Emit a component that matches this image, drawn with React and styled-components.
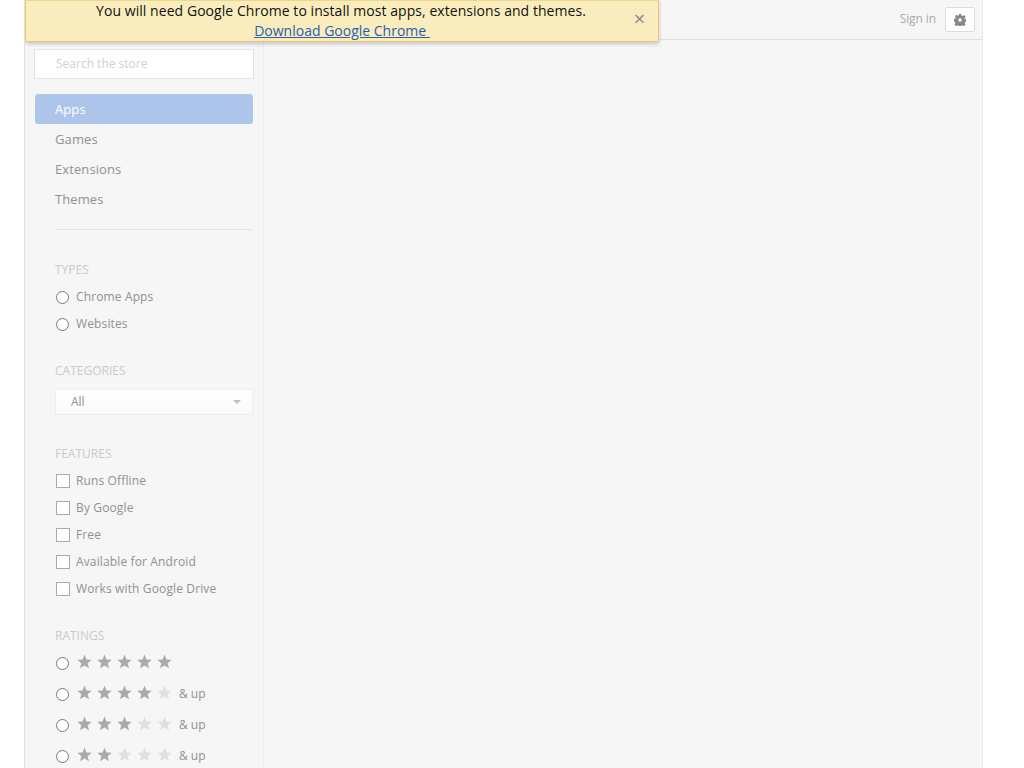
import React from 'react';
import styled, {createGlobalStyle} from 'styled-components';

const GlobalStyle = createGlobalStyle`
  html, body {
    margin: 0;
    padding: 0;
    height: 768px;
    overflow: hidden;
    background: #fff;
    font-family: "Open Sans", "Liberation Sans", sans-serif;
  }
`;

const types = ['Chrome Apps', 'Websites'];
const features = ['Runs Offline', 'By Google', 'Free', 'Available for Android', 'Works with Google Drive'];
const nav = ['Apps', 'Games', 'Extensions', 'Themes'];
const ratings = [5, 4, 3, 2];

const Star = ({on}) => (
    <StarIcon viewBox="0 0 16 16" $on={on}>
        <path d="M8 .6l2.1 5.2 5.6.4-4.3 3.6 1.4 5.500L8 12.300l-4.800 3 1.400-5.500L.3 6.200l5.600-.4z"/>
    </StarIcon>
);

const App = () => (
    <Page>
        <GlobalStyle/>
        <Banner>
            <BannerText>
                <BannerLine>You will need Google Chrome to install most apps, extensions and themes.</BannerLine>
                <BannerLink href="#">Download Google Chrome </BannerLink>
            </BannerText>
            <Close>×</Close>
        </Banner>
        <TopBar>
            <SignIn>Sign in</SignIn>
            <GearButton>
                <svg width="12" height="12" viewBox="0 0 24 24" fill="#888">
                    <path fillRule="evenodd" d="M9.500 0h5l.6 3.400 1.700.7 2.900-2 3.500 3.500-2 2.900.7 1.700 3.400.6v5l-3.400.6-.7 1.700 2 2.900-3.500 3.500-2.900-2-1.700.7-.6 3.400h-5l-.6-3.400-1.700-.7-2.900 2-3.500-3.500 2-2.900-.7-1.700L-.3 14.500v-5l3.400-.6.7-1.700-2-2.900L5.300 1.300l2.900 2 1.700-.7zM12 8.500a3.500 3.500 0 1 0 0 7 3.500 3.500 0 0 0 0-7z"/>
                </svg>
            </GearButton>
        </TopBar>
        <Body>
            <Sidebar>
                <Search placeholder="Search the store"/>
                <NavList>
                    {nav.map((item, i) => <NavItem key={item} $active={i === 0}>{item}</NavItem>)}
                </NavList>
                <Divider/>

                <SectionTitle>TYPES</SectionTitle>
                {types.map(item => (
                    <OptionRow key={item}>
                        <Radio type="radio" name="types"/>
                        <span>{item}</span>
                    </OptionRow>
                ))}

                <CategoryTitle>CATEGORIES</CategoryTitle>
                <Select>
                    All
                    <Caret/>
                </Select>

                <FeatureTitle>FEATURES</FeatureTitle>
                {features.map(item => (
                    <OptionRow key={item}>
                        <CheckBox/>
                        <span>{item}</span>
                    </OptionRow>
                ))}

                <RatingTitle>RATINGS</RatingTitle>
                {ratings.map(count => (
                    <RatingRow key={count}>
                        <RatingRadio type="radio" name="ratings"/>
                        <Stars>
                            {[1, 2, 3, 4, 5].map(n => <Star key={n} on={n <= count}/>)}
                        </Stars>
                        {count < 5 && <AndUp>&amp; up</AndUp>}
                    </RatingRow>
                ))}
            </Sidebar>
            <Content/>
        </Body>
    </Page>
);

const Page = styled.div`
  position: relative;
  box-sizing: border-box;
  width: 959px;
  height: 768px;
  margin-left: 24px;
  background: #f6f6f6;
  border-left: 1px solid #e0e0e0;
  border-right: 1px solid #e8e8e8;
  overflow: hidden;
`;

const Banner = styled.div`
  position: absolute;
  top: 0;
  left: 0;
  box-sizing: border-box;
  width: 634px;
  height: 42px;
  background: #f9edbe;
  border: 1px solid #f0c36d;
  border-top-color: #f0d58f;
  border-radius: 0 0 2px 2px;
  box-shadow: 0 2px 4px rgba(0, 0, 0, 0.2);
  display: flex;
  z-index: 2;
`;

const BannerText = styled.div`
  flex: 1;
  padding-left: 36px;
  text-align: center;
  font-size: 14px;
  line-height: 20px;
  color: #111;
`;

const BannerLine = styled.div`
  letter-spacing: 0.055px;
`;

const BannerLink = styled.a`
  margin-left: 2px;
  color: #2a5db0;
  text-decoration: underline;
  white-space: pre;
`;

const Close = styled.div`
  width: 38px;
  padding-left: 1px;
  box-sizing: border-box;
  font-size: 20px;
  line-height: 36px;
  text-align: center;
  color: #888;
`;

const TopBar = styled.div`
  box-sizing: border-box;
  height: 40px;
  padding: 6px 7px 0 0;
  display: flex;
  justify-content: flex-end;
  border-bottom: 1px solid #e0e0e0;
`;

const SignIn = styled.div`
  font-size: 12px;
  line-height: 25px;
  letter-spacing: -0.1px;
  color: #aaa;
  margin-right: 9px;
`;

const GearButton = styled.div`
  box-sizing: border-box;
  width: 30px;
  height: 25px;
  margin-top: 1px;
  background: #fff;
  border: 1px solid #dcdcdc;
  border-radius: 2px;
  display: flex;
  align-items: center;
  justify-content: center;
`;

const Body = styled.div`
  display: flex;
  height: 728px;
`;

const Sidebar = styled.div`
  box-sizing: border-box;
  width: 239px;
  padding: 9px 10px 0 30px;
  border-right: 1px solid #ececec;
  flex-shrink: 0;
`;

const Content = styled.div`
  flex: 1;
`;

const Search = styled.input`
  display: block;
  box-sizing: border-box;
  width: 220px;
  height: 30px;
  margin-left: -21px;
  padding: 0 21px 2px;
  background: #fff;
  border: 1px solid #e2e2e2;
  outline: none;
  font-family: inherit;
  font-size: 12px;
  &::placeholder {
    color: #d0d0d0;
    opacity: 1;
  }
`;

const NavList = styled.div`
  margin: 15px 0 0 -20px;
`;

const NavItem = styled.div`
  height: 30px;
  padding-left: 20px;
  font-size: 13px;
  line-height: 30px;
  letter-spacing: 0.1px;
  border-radius: 3px;
  color: ${p => (p.$active ? '#fff' : '#919191')};
  background: ${p => (p.$active ? '#aec5eb' : 'transparent')};
`;

const Divider = styled.div`
  height: 1px;
  margin-top: 15px;
  background: #e4e4e4;
`;

const SectionTitle = styled.div`
  margin-top: 31px;
  height: 22px;
  font-size: 12px;
  line-height: 18px;
  color: #cacaca;
`;

const CategoryTitle = styled(SectionTitle)`
  margin-top: 25px;
`;

const FeatureTitle = styled(SectionTitle)`
  margin-top: 30px;
`;

const RatingTitle = styled(SectionTitle)`
  margin-top: 25px;
  height: 21px;
`;

const OptionRow = styled.div`
  display: flex;
  align-items: center;
  height: 27px;
  font-size: 12px;
  letter-spacing: 0.13px;
  color: #919191;
`;

const Radio = styled.input`
  width: 13px;
  height: 13px;
  margin: 2px 7px 0 1px;
  flex-shrink: 0;
`;

const RatingRadio = styled(Radio)`
  margin-top: 0;
`;

const CheckBox = styled.span`
  box-sizing: border-box;
  width: 14px;
  height: 14px;
  margin: 1px 6px 0 1px;
  background: #fff;
  border: 1px solid #aaa;
  flex-shrink: 0;
`;

const Select = styled.div`
  position: relative;
  box-sizing: border-box;
  height: 26px;
  padding-left: 15px;
  margin-top: 5px;
  background: linear-gradient(#fff, #f9f9f9);
  border: 1px solid #eeeeee;
  font-size: 12px;
  line-height: 24px;
  color: #919191;
`;

const Caret = styled.span`
  position: absolute;
  right: 11px;
  top: 10px;
  border-left: 4px solid transparent;
  border-right: 4px solid transparent;
  border-top: 4px solid #c0c0c0;
`;

const RatingRow = styled.div`
  display: flex;
  align-items: center;
  height: 31px;
`;

const Stars = styled.div`
  display: flex;
  gap: 5px;
  margin: -4px 0 0 1px;
`;

const StarIcon = styled.svg`
  width: 15px;
  height: 15px;
  fill: ${p => (p.$on ? '#aaa' : '#e0e0e0')};
`;

const AndUp = styled.span`
  margin: -2px 0 0 7px;
  font-size: 12px;
  color: #919191;
`;

export default App;
